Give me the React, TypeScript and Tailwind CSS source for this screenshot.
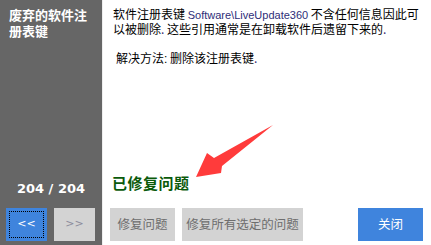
import React from "react"

const cjk = "font-['Noto_Sans_CJK_SC',sans-serif]"

const Arrow = () => (
    <svg className="absolute left-0 top-0 pointer-events-none" width="431" height="245" viewBox="0 0 431 245">
        <polygon
            points="196,177 207,153 214,158 273,125 222,166 221,173"
            fill="#ff3b3b"
        />
    </svg>
)

const App: React.FC = () => {
    return (
        <div className={`relative flex w-[431px] h-[245px] bg-white overflow-hidden ${cjk}`}>
            {/* side panel */}
            <div className="w-[102px] h-full bg-[#666666] flex flex-col px-[6px] pb-[4px]">
                <p className="mt-[7px] pl-[3px] text-[13px] leading-[16px] font-bold text-white">
                    废弃的软件注册表键
                </p>
                <div className="flex-1"></div>
                <p className="text-center text-[13px] leading-[14px] font-bold text-white font-['DejaVu_Sans',sans-serif] mb-[12px]">
                    204 / 204
                </p>
                <div className="flex gap-[7px]">
                    <button className="w-[41px] h-[33px] bg-[#3f84dd] flex p-[3px]">
                        <div className="flex-1 border border-dotted border-black flex items-center justify-center text-white text-[11px] font-['DejaVu_Sans',sans-serif]">
                            &lt;&lt;
                        </div>
                    </button>
                    <button className="w-[41px] h-[33px] bg-[#d3d3d3] flex items-center justify-center text-[#8c8c9c] text-[11px] font-['DejaVu_Sans',sans-serif]">
                        &gt;&gt;
                    </button>
                </div>
            </div>
            <div className="w-px h-full bg-[#eeeeee]"></div>

            {/* content */}
            <div className="flex-1 flex flex-col pl-[7px] pr-[8px] pb-[4px]">
                <div className="pl-[3px] pt-[7px] text-[12px] leading-[14px] text-black whitespace-nowrap">
                    <p>
                        软件注册表键 <span className="font-['Liberation_Sans',sans-serif] text-[#2e2e78] text-[11px]">Software\LiveUpdate360</span> 不含任何信息因此可
                        <br />
                        以被删除<span className="text-[#3a2a70]">.</span> 这些引用通常是在卸载软件后遗留下来的<span className="text-[#3a2a70]">.</span>
                    </p>
                    <p className="mt-[15px] pl-[3px]">
                        解决方法<span className="font-['Liberation_Sans',sans-serif]">:</span> 删除该注册表键<span className="text-[#3a2a70]">.</span>
                    </p>
                </div>
                <div className="flex-1"></div>
                <p className="pl-[2px] text-[15px] leading-[18px] font-bold tracking-[0.5px] text-[#0a5a0a] mb-[16px]">
                    已修复问题
                </p>
                <div className="flex items-center h-[33px]">
                    <button className="w-[65px] h-[33px] bg-[#d3d3d3] text-[#6e6e6e] text-[12.5px]">修复问题</button>
                    <button className="ml-[7px] w-[121px] h-[33px] bg-[#d3d3d3] text-[#6e6e6e] text-[12.5px]">修复所有选定的问题</button>
                    <div className="flex-1"></div>
                    <button className="w-[65px] h-[33px] bg-[#3f84dd] text-white text-[12.5px]">关闭</button>
                </div>
            </div>

            <Arrow />
        </div>
    )
}

export default App
